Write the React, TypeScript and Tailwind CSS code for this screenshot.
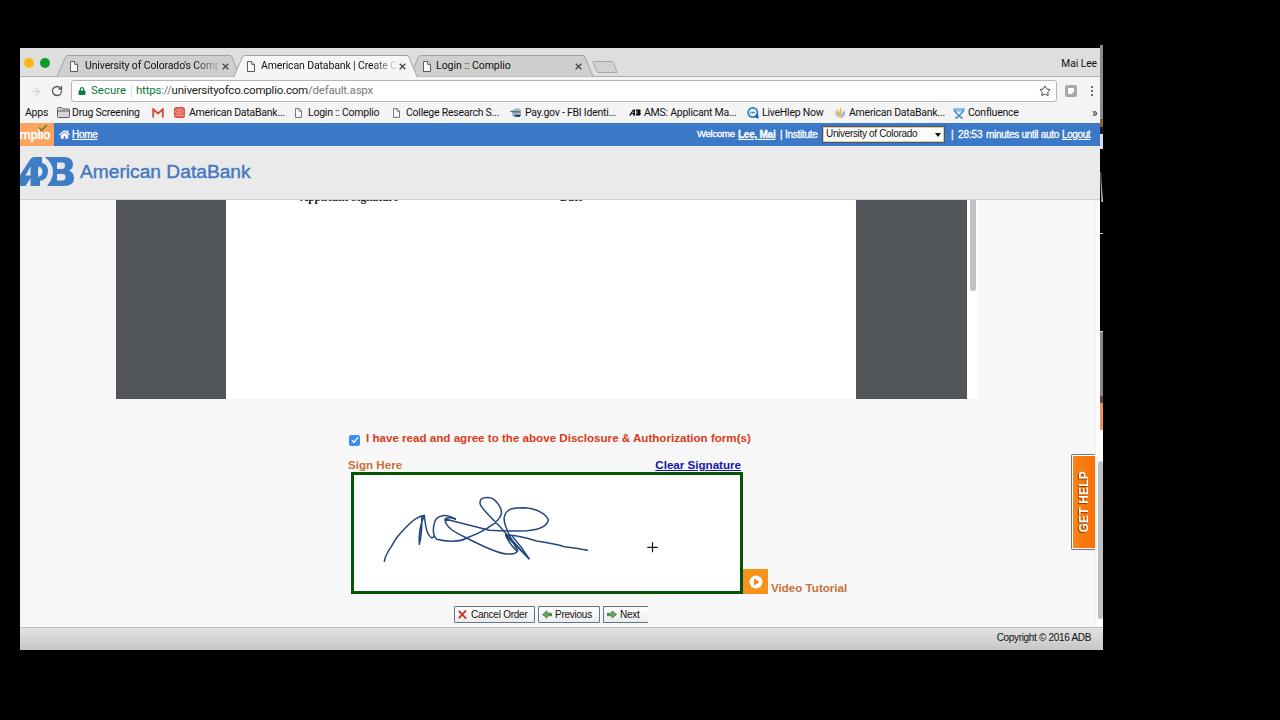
import type { ReactNode } from 'react'
import clsx from 'clsx'
import { Star, RotateCw, ArrowRight } from 'lucide-react'
import { FaHome, FaLock } from 'react-icons/fa'

function PageIcon({ className }: { className?: string }) {
  return (
    <svg viewBox="0 0 8 11" className={clsx('shrink-0', className)} fill="#fafafa" stroke="#5a5a5a" strokeWidth="1">
      <path d="M.5.5h4.3l2.7 2.8v7.2h-7z" />
      <path d="M4.7.6v2.8h2.8" />
    </svg>
  )
}

function FolderIcon() {
  return (
    <svg viewBox="0 0 13 11" className="w-[13px] h-[11px]" fill="#d6d6d6" stroke="#5c5c5c" strokeWidth="1">
      <path d="M.5 9.500v-8q0-1 1-1h3l1 1.500h6q1 0 1 1v6.500q0 1-1 1h-10q-1 0-1-1z" />
      <path d="M.5 4h12" />
    </svg>
  )
}

function GmailIcon() {
  return (
    <svg viewBox="0 0 12 10" className="w-3 h-2.5">
      <path d="M1 1h10v8.500H1z" fill="#f7f2f1" />
      <path d="M1.200 9.500V1.200L6 5.500l4.800-4.300v8.300" fill="none" stroke="#d54b3d" strokeWidth="1.900" />
    </svg>
  )
}

function StampIcon() {
  return (
    <svg viewBox="0 0 11 11" className="w-[11px] h-[11px]">
      <rect width="11" height="11" rx="2.500" fill="#dc5546" />
      <g fill="none" stroke="#f4b5a8" strokeWidth=".8">
        <ellipse cx="5.500" cy="4.500" rx="4" ry="2.600" />
        <ellipse cx="5.500" cy="4.500" rx="1.800" ry="1" />
        <path d="M1 8.500h9" />
      </g>
    </svg>
  )
}

function PayGovIcon() {
  return (
    <svg viewBox="0 0 12 11" className="w-3 h-[11px]">
      <path d="M1 3.500L8 1l3 2v3H3z" fill="#a9b4bb" />
      <path d="M0 4.500h10M2 6h9" stroke="#516a78" strokeWidth=".9" />
      <path d="M3 7.500h8l-1 2.500H6z" fill="#1b4a6b" />
      <path d="M2 8l4 2" stroke="#4aa5c8" strokeWidth="1" />
    </svg>
  )
}

function AmsIcon() {
  return (
    <svg viewBox="0 0 12 7" className="w-3 h-[7px]">
      <path d="M0 6.500L4 .5h2v6H4V5H2.600L1.800 6.500zM6.700.5H9q1.200 0 1 1.500.8 4.500-2 4.500H6.500l1-3z" fill="#111" />
      <path d="M9 .5h2q1.200 1 .2 2.800Q12.500 5 11 6.500H8.500l1-3z" fill="#111" />
      <path d="M3.500 3.800L4.300 2.500v1.300zM8 2v3" fill="#fff" stroke="#eee" strokeWidth=".5" />
    </svg>
  )
}

function LiveHelpIcon() {
  return (
    <svg viewBox="0 0 12 12" className="w-3 h-3">
      <circle cx="5.800" cy="5.500" r="5.500" fill="#1c88c4" />
      <path d="M7 9.500l4.500 2.500-.5-6z" fill="#155f9c" />
      <circle cx="5.800" cy="5.500" r="3.700" fill="#eef8fc" />
      <path d="M3.300 5.600h5" stroke="#27607f" strokeWidth="1.500" strokeDasharray="1.200 .5" />
    </svg>
  )
}

function FlameIcon() {
  return (
    <svg viewBox="0 0 12 12" className="w-3 h-3">
      <path d="M0 4q3 1 5 7Q1 9 0 4z" fill="#e3c493" />
      <path d="M2.500 2q3 3 3.500 9Q2 7 2.500 2z" fill="#b9a6a0" />
      <path d="M6.500 0Q9.500 5 6 11.500 4 6 6.500 0z" fill="#f2bd3c" />
      <path d="M11 3q1 6-4.500 8.500Q7.500 6 11 3z" fill="#8fb2e2" />
    </svg>
  )
}

function ConfluenceIcon() {
  return (
    <svg viewBox="0 0 12 12" className="w-3 h-3">
      <path d="M.5 1h11v1.500Q9 5 6 5T.5 2.500z" fill="#8fc1e6" />
      <path d="M1 2.500Q3 7 9.500 11.500M11 2.500Q9 7 2.500 11.500" fill="none" stroke="#3e92d1" strokeWidth="1.700" />
    </svg>
  )
}

const tabs = [
  { title: "University of Colorado's Comp", box: 'w-[177px]', text: 'ml-[7px] w-[134px]', active: false },
  { title: 'American Databank | Create O', box: 'w-[176px]', text: 'ml-[6px] w-[135px]', active: true },
  { title: 'Login :: Complio', box: 'w-[180px]', text: 'ml-[5px] w-[136px]', active: false },
]

const bookmarks: { label: string; box: string; slot: string; icon?: ReactNode }[] = [
  { label: 'Apps', box: 'w-[32px]', slot: '' },
  { label: 'Drug Screening', box: 'w-[95px]', slot: 'w-[15px]', icon: <FolderIcon /> },
  { label: '', box: 'w-[22px]', slot: 'w-[16px]', icon: <GmailIcon /> },
  { label: 'American DataBank...', box: 'w-[121px]', slot: 'w-[15px]', icon: <StampIcon /> },
  { label: 'Login :: Complio', box: 'w-[98px]', slot: 'w-[13px]', icon: <PageIcon className="w-[7px] h-[10px]" /> },
  { label: 'College Research S...', box: 'w-[117px]', slot: 'w-[13px]', icon: <PageIcon className="w-[7px] h-[10px]" /> },
  { label: 'Pay.gov - FBI Identi...', box: 'w-[119px]', slot: 'w-[15px]', icon: <PayGovIcon /> },
  { label: 'AMS: Applicant Ma...', box: 'w-[118px]', slot: 'w-[15px]', icon: <AmsIcon /> },
  { label: 'LiveHlep Now', box: 'w-[87px]', slot: 'w-[15px]', icon: <LiveHelpIcon /> },
  { label: 'American DataBank...', box: 'w-[119px]', slot: 'w-[15px]', icon: <FlameIcon /> },
  { label: 'Confluence', box: 'w-[139px]', slot: 'w-[15px]', icon: <ConfluenceIcon /> },
]

function TabStrip() {
  return (
    <div className="flex h-[29px] shrink-0 bg-[#dedede] border-b border-[#b0b0b0]">
      <div className="flex w-[37px] shrink-0 items-center gap-[6px] pl-[4px] pt-[2px]">
        <span className="size-[10px] shrink-0 rounded-full bg-[#fdb713]" />
        <span className="size-[10px] shrink-0 rounded-full bg-[#0a9c2c]" />
      </div>
      {tabs.map((tab) => (
        <div key={tab.title} className={clsx('relative flex items-center shrink-0 pt-[8px] pl-[13px]', tab.box, tab.active && 'z-10')}>
          <svg viewBox="0 0 186 22" preserveAspectRatio="none" className="absolute left-0 top-[7px] w-[186px] h-[22px] overflow-visible">
            <path d="M0 21.500L8.500 2Q9 .5 11 .5H173q1.500 0 2 1.500l8 19.500" fill={tab.active ? '#f6f6f6' : '#cfcfcf'} stroke="#a2a2a2" strokeWidth="1" />
            {tab.active && <path d="M1 21.500h181" stroke="#f6f6f6" strokeWidth="1.500" />}
          </svg>
          <PageIcon className="relative w-2 h-[11px]" />
          <span className={clsx('relative whitespace-nowrap text-[10.5px] tracking-[-0.03px] text-[#111]', tab.text, tab.title.length > 20 && 'tracking-[-0.13px] [mask-image:linear-gradient(to_right,black_82%,transparent_102%)]')}>
            {tab.title}
          </span>
          <svg viewBox="0 0 7 7" className="relative ml-[3px] size-[7px] shrink-0" stroke="#444" strokeWidth="1.300">
            <path d="M.7.7l5.600 5.600M6.300.7L.7 6.300" />
          </svg>
        </div>
      ))}
      <svg viewBox="0 0 26 12" className="w-[26px] h-[12px] mt-[13px] ml-[2px] overflow-visible">
        <path d="M2 .5h18q1 0 1.500 1L25 11.500H6.500q-1 0-1.500-1L1 2Q.7.500 2 .5z" fill="#d2d2d2" stroke="#a8a8a8" />
      </svg>
      <span className="ml-auto pr-[3px] pt-[9px] text-[10.2px] leading-[14px] text-[#111]">Mai Lee</span>
    </div>
  )
}

function Toolbar() {
  return (
    <div className="flex h-[25px] shrink-0 items-center bg-[#f4f4f4] pt-[3px]">
      <ArrowRight className="ml-[9px] size-[13px] text-[#cfcfcf]" strokeWidth={2} />
      <RotateCw className="ml-[9px] size-[12px] text-[#555]" strokeWidth={2.6} />
      <div className="ml-[8px] flex h-[22px] w-[986px] items-center rounded-[3px] border border-[#b5b5b5] bg-white pl-[6px] text-[11.5px]">
        <FaLock className="size-[8px] text-[#0b8043]" />
        <span className="ml-[5px] w-[40px] whitespace-nowrap text-[#0b7a3f]">Secure</span>
        <span className="h-[14px] w-px bg-[#e2e2e2]" />
        <span className="ml-[4px] whitespace-nowrap tracking-[-0.21px] text-[#777]">
          <span className="text-[#0b7a3f]">https</span>://<span className="text-[#1a1a1a]">universityofco.complio.com</span>/default.aspx
        </span>
        <Star className="ml-auto mr-[5px] size-[12px] text-[#444]" strokeWidth={2} />
      </div>
      <span className="ml-[8px] flex size-[12px] items-center justify-center rounded-[2px] bg-[#a8a8a8]">
        <svg viewBox="0 0 6 6" className="size-[6px]">
          <path d="M0 0h6v3.500L3.500 6H1L0 4.500z" fill="#fff" />
        </svg>
      </span>
      <div className="ml-[14px] flex flex-col gap-[2px]">
        <span className="size-[2px] rounded-full bg-[#444]" />
        <span className="size-[2px] rounded-full bg-[#444]" />
        <span className="size-[2px] rounded-full bg-[#444]" />
      </div>
    </div>
  )
}

function BookmarkBar() {
  return (
    <div className="flex h-[21px] shrink-0 items-center bg-[#f4f4f4] pl-[5px] text-[10.5px] tracking-[-0.24px] text-[#111]">
      {bookmarks.map((item, i) => (
        <div key={i} className={clsx('flex shrink-0 items-center whitespace-nowrap', item.box)}>
          {item.icon && <span className={clsx('flex shrink-0', item.slot)}>{item.icon}</span>}
          {item.label}
        </div>
      ))}
      <span className="text-[12px] leading-none">»</span>
    </div>
  )
}

function SiteNav() {
  return (
    <div className="flex h-[23px] shrink-0 items-center bg-[#3b79c8] font-['Liberation_Sans',sans-serif] text-[10px] tracking-[-0.1px] text-white [-webkit-text-stroke:0.3px_white]">
      <div className="relative flex h-full w-[34px] items-center justify-end bg-[#fba45e] pr-[4px]">
        <span className="font-['Open_Sans',sans-serif] text-[12px] font-semibold tracking-[-0.5px]">mplio</span>
        <svg viewBox="0 0 10 8" className="absolute left-[18px] top-[1px] w-[10px] h-[8px]" fill="none" stroke="#8f8a1c" strokeWidth="2">
          <path d="M1 3.500l2.500 3L9 1" />
        </svg>
      </div>
      <FaHome className="ml-[5px] size-[11px]" />
      <a className="ml-[2px] tracking-[-0.3px] underline">Home</a>
      <span className="ml-auto w-[41px] whitespace-nowrap text-[9.6px] tracking-[-0.3px]">Welcome</span>
      <a className="w-[38px] whitespace-nowrap font-bold tracking-[-0.25px] underline">Lee, Mai</a>
      <span className="ml-[4px] w-[42px] whitespace-nowrap tracking-[-0.25px]">| Institute</span>
      <div className="flex h-[17px] w-[123px] items-center border-2 border-[#e3cf9c] bg-[#fdfdfd] outline-1 -outline-offset-1 outline-[#4e5562] pl-[2px] text-[#111] [-webkit-text-stroke:0]">
        <span className="mt-[-2px] whitespace-nowrap tracking-[-0.33px]">University of Colorado</span>
        <svg viewBox="0 0 6 4" className="ml-auto mr-[2px] h-[4px] w-[6px]">
          <path d="M0 0h6L3 4z" fill="#111" />
        </svg>
      </div>
      <span className="ml-[6px] w-[7px]">|</span>
      <span className="w-[28px]">28:53</span>
      <span className="w-[76px] whitespace-nowrap tracking-[-0.3px]">minutes until auto</span>
      <a className="mr-[10px] w-[28px] tracking-[-0.4px] underline">Logout</a>
    </div>
  )
}

function SiteHeader() {
  return (
    <div className="flex h-[54px] shrink-0 items-center border-b border-[#cfcfcf] bg-[#eaeaea]">
      <svg viewBox="0 0 54 29" className="mt-[-2px] h-[29px] w-[54px]" fill="#3f7cc6">
        <path d="M0 18L10.500 2Q12 0 14.500 0H22V6Q18 8 18 14.500T20 23V29H10.500V21L5.500 29H0z" />
        <path d="M5.500 18.500h5V9.500z" fill="#eaeaea" />
        <path d="M18.500 5.500Q28 5.500 28 14.500T18.500 24V20Q22.500 18 22.500 14.500T18.500 9z" />
        <path d="M25 0H44Q53 0 53 7.500 53 11.500 49 13.500 54 15.500 54 21 54 29 44 29H27Q33 22 33 14.500T25 0zM37 5.500V12h4.500q3.500 0 3.500-3.500T41.500 5.500zM37 17v6.500h5q3.500 0 3.500-3.500T42 17z" fillRule="evenodd" />
      </svg>
      <span className="ml-[6px] font-['Liberation_Sans',sans-serif] text-[19.200px] text-[#4278c0] [-webkit-text-stroke:0.4px_#4278c0]">American DataBank</span>
    </div>
  )
}

function DocumentViewer() {
  return (
    <div className="ml-[96px] flex h-[199px] w-[862px] shrink-0 bg-white">
      <div className="flex w-[851px] bg-[#525559] pl-[110px]">
        <div className="w-[630px] overflow-hidden bg-white">
          <div className="-mt-[10px] flex pl-[74px] font-['Liberation_Serif',serif] text-[11.5px] leading-[14px] font-bold tracking-[-0.05px] text-[#222]">
            <span className="w-[260px]">Applicant Signature</span>
            <span>Date</span>
          </div>
        </div>
      </div>
      <div className="ml-[3px] h-[91px] w-[6px] rounded-b-[3px] bg-[#c1c1c1]" />
    </div>
  )
}

function SignaturePad() {
  return (
    <div className="h-[122px] w-[392px] border-[3px] border-[#045404] bg-white">
      <svg viewBox="72 165 1158 348" className="h-[116px] w-[386px]" fill="none">
        <g stroke="#24477f" strokeWidth="4.500" strokeLinejoin="round" strokeLinecap="round">
          <path d="M163 424Q166 405 184 380C200 350 206 345 228 322Q258 290 283 286C272 310 266 345 268 373Q277 340 275 290L283 286C286 310 288 345 306 354L311 350" />
          <path d="M376 297C350 280 323 286 315 303C308 325 307 345 320 358C345 365 390 367 410 354C450 340 505 310 513 285C520 265 495 235 480 233C455 229 447 240 451 254C465 280 500 305 527 340L597 416L572 390Q545 365 527 346Q540 375 562 394" />
          <path d="M376 297Q355 290 345 297C345 320 370 335 410 354C460 380 500 398 528 402Q558 404 563 392C540 350 518 310 523 290C530 265 550 263 585 263C625 266 650 285 655 300C650 320 625 330 590 332Q530 334 478 331L345 297" />
          <path d="M527 345L597 416Q575 380 548 350M527 345Q560 345 620 363Q680 372 703 380Q740 384 772 391" />
        </g>
        <path d="M952 382h31M967.500 367v30" stroke="#111" strokeWidth="3.500" />
      </svg>
    </div>
  )
}

function ArrowIcon({ flip }: { flip?: boolean }) {
  return (
    <svg viewBox="0 0 11 10" className={clsx('w-[10px] h-[9px]', flip && '-scale-x-100')}>
      <path d="M.5 3.500h1v3h-1zM2.200 3.500H5.500V1l5 4-5 4V6.500H2.200z" fill="#5fae57" stroke="#2f6b35" strokeWidth=".8" />
    </svg>
  )
}

function OrderButton({ label, icon, className }: { label: string; icon: ReactNode; className: string }) {
  return (
    <button className={clsx('flex h-[17px] items-center whitespace-nowrap border border-[#5f7788] bg-gradient-to-b from-white to-[#ececec] pl-[3px] text-[10px] text-[#111]', className)}>
      {icon}
      {label}
    </button>
  )
}

function ConsentForm() {
  return (
    <div className="flex flex-col pl-[328px] font-['Liberation_Sans',sans-serif]">
      <label className="mt-[32px] flex h-[16px] items-center">
        <span className="mt-[2px] ml-px flex size-[11px] items-center justify-center rounded-[2px] bg-[#3b8df0]">
          <svg viewBox="0 0 8 8" className="size-[8px]" fill="none" stroke="#fff" strokeWidth="1.300">
            <path d="M1 4.300l2 2.200L7 1.300" />
          </svg>
        </span>
        <span className="mt-[-2px] ml-[6px] whitespace-nowrap text-[11.600px] font-bold text-[#dc3a18]">
          I have read and agree to the above Disclosure &amp; Authorization form(s)
        </span>
      </label>
      <div className="mt-[11px] mb-px flex h-[13px] w-[393px] justify-between text-[11.600px] leading-[13px] font-bold">
        <span className="text-[#c8713a]">Sign Here</span>
        <a className="text-[#1616a8] underline">Clear Signature</a>
      </div>
      <div className="flex items-end pl-[3px]">
        <SignaturePad />
        <div className="flex size-[25px] items-center justify-center bg-[#f6931d]">
          <svg viewBox="0 0 14 14" className="size-[14px]">
            <circle cx="7" cy="7" r="6.500" fill="#fff" />
            <path d="M5 3.500L10.500 7 5 10.500z" fill="#f0861a" />
          </svg>
        </div>
        <span className="ml-[3px] text-[11.600px] leading-[13px] font-bold text-[#c8713a]">Video Tutorial</span>
      </div>
      <div className="mt-[12px] ml-[106px] flex gap-[3px]">
        <OrderButton
          label="Cancel Order"
          className="w-[81px] gap-[4px] rounded-[1px] tracking-[-0.25px]"
          icon={
            <svg viewBox="0 0 10 10" className="size-[9px]" stroke="#d3281e" strokeWidth="2">
              <path d="M1 1l8 8.500M9 .5L1 9" />
            </svg>
          }
        />
        <OrderButton label="Previous" className="w-[62px] gap-[3px] rounded-[1px] tracking-[-0.25px]" icon={<ArrowIcon flip />} />
        <OrderButton label="Next" className="w-[45px] gap-[3px] border-r-0 tracking-[-0.25px]" icon={<ArrowIcon />} />
      </div>
    </div>
  )
}

// sliver of the desktop that shows beside the browser window
function DesktopEdge() {
  return (
    <div className="absolute left-[1100px] top-[45px] flex w-[3px] flex-col">
      <div className="h-[74px] bg-[#8b8b8b]" />
      <div className="h-[8px] bg-[#8a6332]" />
      <div className="h-[7px] bg-[#1b1c30]" />
      <div className="h-[15px] bg-[#d8daf2]" />
      <div className="h-[23px] bg-black" />
      <div className="h-[30px] bg-black">
        <div className="h-full bg-gradient-to-b from-[#555] to-[#ddd] [clip-path:polygon(0_0,40%_0,100%_100%,50%_100%)]" />
      </div>
      <div className="h-[31px] bg-black" />
      <div className="h-px bg-[#d0d0d0]" />
      <div className="h-[97px] bg-black" />
      <div className="h-px bg-[#e6e6e6]" />
      <div className="h-[64px] bg-[#8c8583]" />
      <div className="h-[7px] bg-[#63494a]" />
      <div className="h-[27px] bg-[#ee9068]" />
    </div>
  )
}

export default function App() {
  return (
    <div className="relative h-[720px] w-[1280px] overflow-hidden bg-black pt-[48px] pl-[20px] font-[Roboto,sans-serif]">
      <div className="flex h-[602px] w-[1083px] flex-col bg-[#f7f7f7]">
        <div className="flex w-[1080px] shrink-0 flex-col">
          <TabStrip />
          <Toolbar />
          <BookmarkBar />
          <SiteNav />
          <SiteHeader />
        </div>
        <div className="flex h-[427px] shrink-0">
          <div className="flex w-[1075px] flex-col">
            <DocumentViewer />
            <ConsentForm />
          </div>
          <div className="flex w-[8px] items-end justify-end border-l border-[#f0f0f0] bg-[#fdfdfd] pb-[8px]">
            <div className="h-[158px] w-[5px] rounded-[3px] bg-[#c0c0c0]" />
          </div>
        </div>
        <div className="flex h-[23px] shrink-0 items-center justify-end border-t border-[#bcbcbc] bg-gradient-to-b from-[#e2e2e2] to-[#c6c6c6] pr-[12px] pb-[4px] font-['Liberation_Sans',sans-serif] text-[10px] tracking-[-0.32px] text-[#111]">
          Copyright © 2016 ADB
        </div>
      </div>
      <div className="absolute left-[1071px] top-[454px] flex h-[96px] w-[24px] items-center justify-center rounded-l-[2px] border border-r-0 border-[#777] bg-white p-[1px] pr-0">
        <div className="flex h-full w-full items-center justify-center bg-gradient-to-r from-[#fb8418] to-[#f77005]">
          <span className="rotate-180 whitespace-nowrap font-['Liberation_Sans',sans-serif] text-[12px] font-bold tracking-[0.2px] text-white [text-shadow:-1px_-1px_1px_#8a3c00] [writing-mode:vertical-rl]">
            GET HELP
          </span>
        </div>
      </div>
      <DesktopEdge />
    </div>
  )
}
